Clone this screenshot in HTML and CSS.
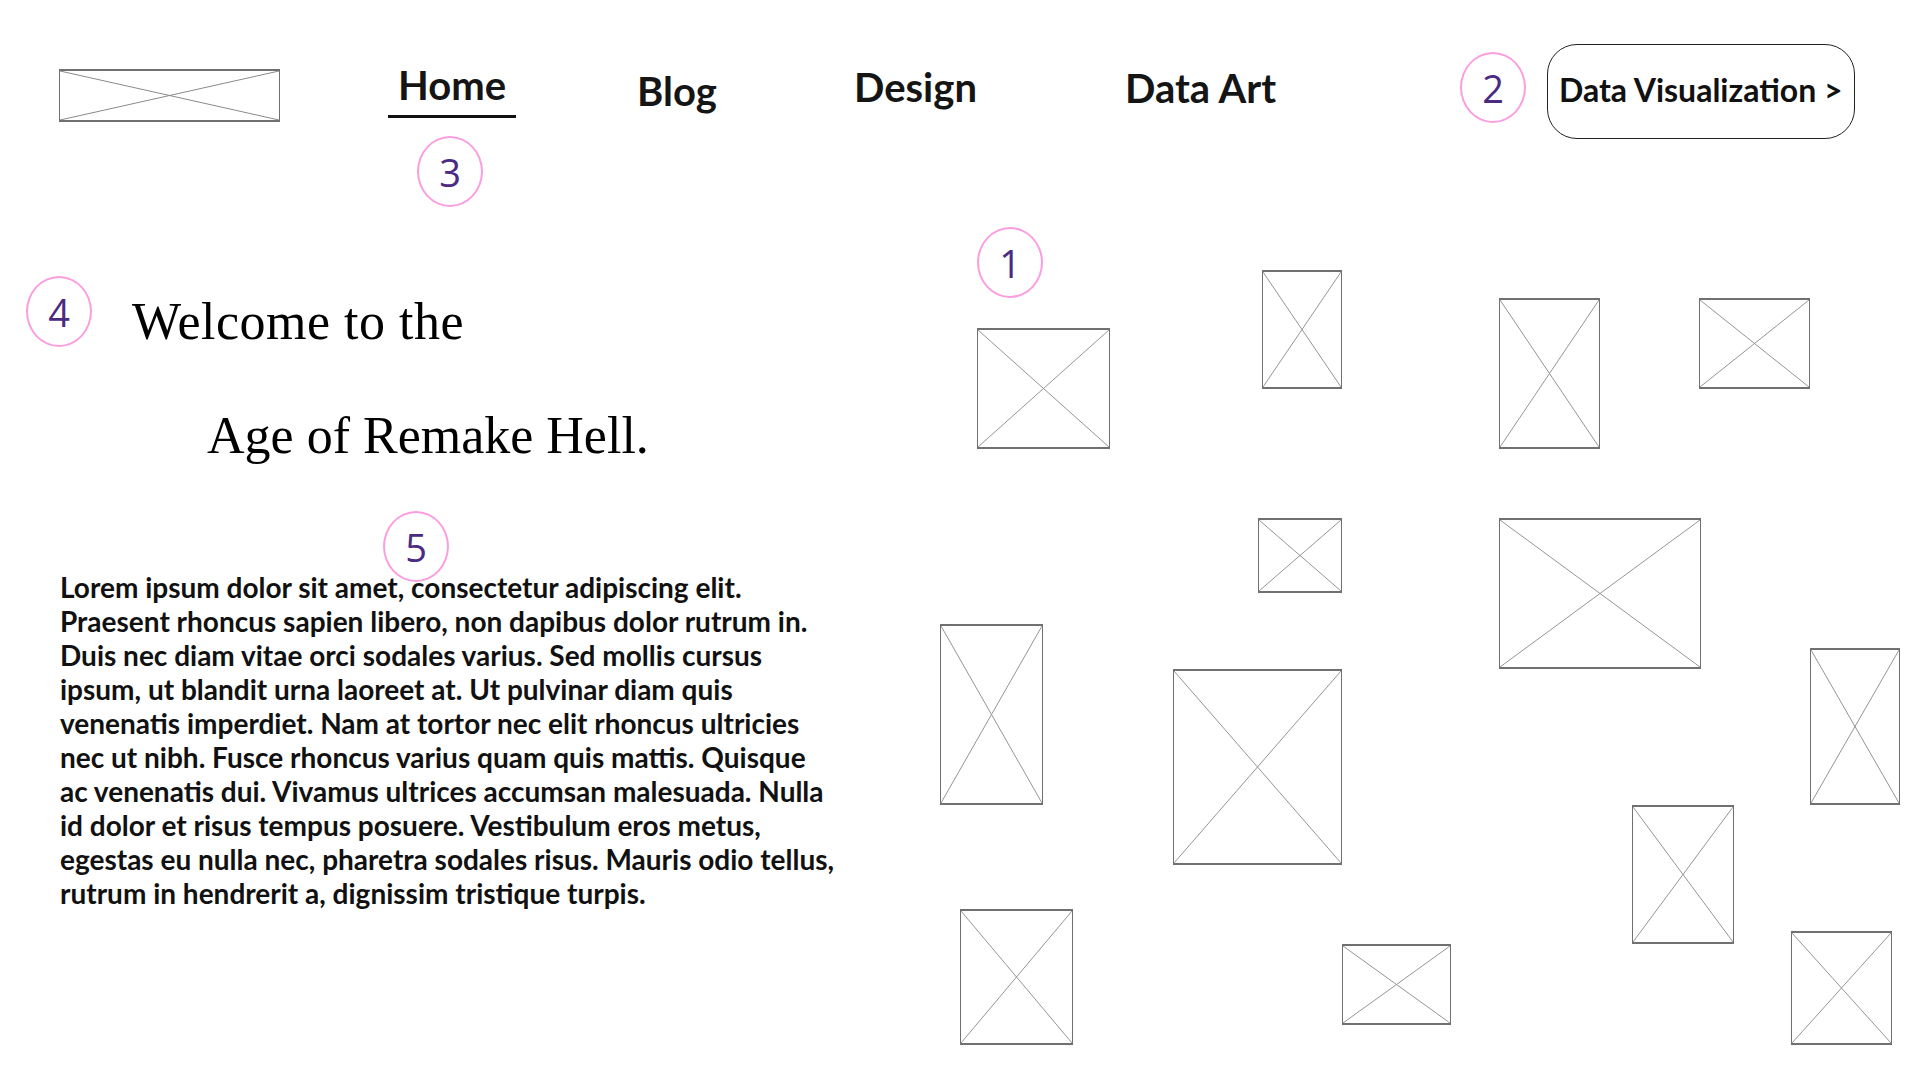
FILE: index.html
```html
<!DOCTYPE html>
<html lang="en">
<head>
    <meta charset="UTF-8">
    <meta name="viewport" content="width=device-width, initial-scale=1.0">
    <title>Age of Remake Hell - Wireframe</title>
    <link rel="stylesheet" href="styles.css">
</head>
<body>
    <header class="site-header">
        <div class="placeholder logo">
            <svg viewBox="0 0 100 100" preserveAspectRatio="none"><line x1="0" y1="0" x2="100" y2="100"/><line x1="100" y1="0" x2="0" y2="100"/></svg>
        </div>

        <nav class="main-nav">
            <a href="#" class="nav-link active">
                <span class="nav-label">Home</span>
                <span class="note note-home">3</span>
            </a>
            <a href="#" class="nav-link nav-blog">Blog</a>
            <a href="#" class="nav-link nav-design">Design</a>
            <a href="#" class="nav-link nav-art">Data Art</a>
        </nav>

        <div class="header-actions">
            <span class="note note-inline">2</span>
            <a href="#" class="cta">Data Visualization &gt;</a>
        </div>
    </header>

    <main class="page">
        <section class="intro">
            <h1 class="headline">
                <span class="note note-title">4</span>
                <span class="line-one">Welcome to the</span>
                <span class="line-two">Age of Remake Hell.</span>
            </h1>

            <p class="lead">
                <span class="note note-text">5</span>
                Lorem ipsum dolor sit amet, consectetur adipiscing elit. Praesent rhoncus sapien libero, non dapibus dolor rutrum in. Duis nec diam vitae orci sodales varius. Sed mollis cursus ipsum, ut blandit urna laoreet at. Ut pulvinar diam quis venenatis imperdiet. Nam at tortor nec elit rhoncus ultricies nec ut nibh. Fusce rhoncus varius quam quis mattis. Quisque ac venenatis dui. Vivamus ultrices accumsan malesuada. Nulla id dolor et risus tempus posuere. Vestibulum eros metus, egestas eu nulla nec, pharetra sodales risus. Mauris odio tellus, rutrum in hendrerit a, dignissim tristique turpis.
            </p>
        </section>

        <section class="gallery" id="gallery">
            <span class="note note-gallery">1</span>
        </section>
    </main>

    <script>
        // image placeholders: [left, top, width, height] inside the gallery
        const tiles = [
            [57, 108, 133, 121],
            [342, 50, 80, 119],
            [579, 78, 101, 151],
            [779, 78, 111, 91],
            [338, 298, 84, 75],
            [579, 298, 202, 151],
            [20, 404, 103, 181],
            [253, 449, 169, 196],
            [890, 428, 90, 157],
            [712, 585, 102, 139],
            [40, 689, 113, 136],
            [422, 724, 109, 81],
            [871, 711, 101, 114]
        ];

        const gallery = document.getElementById('gallery');
        tiles.forEach(function(t) {
            const tile = document.createElement('div');
            tile.className = 'placeholder tile';
            tile.style.left = t[0] + 'px';
            tile.style.top = t[1] + 'px';
            tile.style.width = t[2] + 'px';
            tile.style.height = t[3] + 'px';
            tile.innerHTML = '<svg viewBox="0 0 100 100" preserveAspectRatio="none"><line x1="0" y1="0" x2="100" y2="100"/><line x1="100" y1="0" x2="0" y2="100"/></svg>';
            gallery.appendChild(tile);
        });
    </script>
</body>
</html>
```

FILE: styles.css
```css
body {
    margin: 0;
    background: #fff;
    color: #111;
    font-family: Lato, "Liberation Sans", sans-serif;
}
a {
    color: inherit;
    text-decoration: none;
}

/* placeholders */
.placeholder {
    box-sizing: border-box;
    border: 1px solid #707070;
    border-top-width: 2px;
    border-bottom-width: 2px;
    background: #fff;
}
.placeholder svg {
    display: block;
    width: 100%;
    height: 100%;
}
.placeholder line {
    stroke: #959595;
    stroke-width: 1;
    vector-effect: non-scaling-stroke;
}
.logo line {
    stroke: #8a8a8a;
}

/* annotation bubbles */
.note {
    position: absolute;
    box-sizing: border-box;
    width: 66px;
    height: 71px;
    border: 2px solid #fb9ee0;
    border-radius: 50%;
    display: flex;
    align-items: center;
    justify-content: center;
    font-family: "Open Sans", sans-serif;
    font-weight: 400;
    font-size: 38px;
    line-height: 1;
    color: #4b2a82;
    background: transparent;
}

/* header */
.site-header {
    display: flex;
    align-items: flex-start;
    height: 139px;
    padding: 44px 65px 0 59px;
    box-sizing: border-box;
}
.logo {
    width: 221px;
    height: 53px;
    margin-top: 25px;
}
.main-nav {
    display: grid;
    grid-template-columns: 251px 215px 273px auto;
    margin-left: 108px;
    margin-top: 17px;
}
.nav-link {
    position: relative;
    justify-self: start;
    font-size: 40px;
    font-weight: 700;
    line-height: 49px;
    color: #151515;
}
.nav-link.active {
    width: 128px;
    text-align: center;
    padding-bottom: 5px;
    border-bottom: 3px solid #111;
}
.nav-blog {
    padding-top: 6px;
    margin-left: -2px;
}
.nav-design {
    padding-top: 2px;
}
.nav-art {
    padding-top: 3px;
    margin-left: -2px;
}
.note-home {
    top: 75px;
    left: 29px;
}
.header-actions {
    display: flex;
    align-items: flex-start;
    gap: 21px;
    margin-left: auto;
}
.note-inline {
    position: static;
    margin-top: 8px;
}
.cta {
    box-sizing: border-box;
    width: 308px;
    height: 95px;
    padding: 0 0 4px 11px;
    display: flex;
    align-items: center;
    border: 1.5px solid #222;
    border-radius: 30px;
    font-size: 32px;
    font-weight: 700;
    color: #111;
}

/* main area */
.page {
    display: grid;
    grid-template-columns: 920px 1000px;
    margin-top: 81px;
}
.intro {
    padding-left: 59px;
}
.headline {
    position: relative;
    margin: 45px 0 0;
    font-family: "Liberation Serif", "Times New Roman", serif;
    font-weight: 400;
    font-size: 52px;
    line-height: 114px;
    color: #000;
}
.headline .line-one {
    display: block;
    padding-left: 73px;
    letter-spacing: 0.5px;
}
.headline .line-two {
    display: block;
    padding-left: 148px;
}
.note-title {
    top: 11px;
    left: -33px;
}
.lead {
    position: relative;
    width: 780px;
    margin: 77px 0 0 1px;
    font-size: 28px;
    font-weight: 700;
    line-height: 34px;
    color: #111;
}
.note-text {
    top: -59px;
    left: 323px;
}

.gallery {
    position: relative;
    height: 860px;
}
.gallery .tile {
    position: absolute;
}
.note-gallery {
    top: 7px;
    left: 57px;
}
```
